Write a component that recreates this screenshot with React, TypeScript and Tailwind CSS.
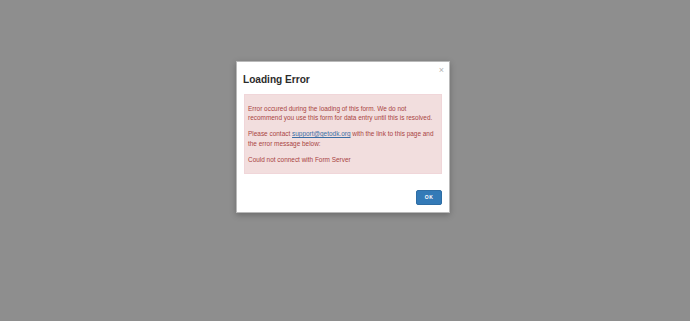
export default function App() {
  return (
    <main className="w-[690px] h-[321px] bg-[#8e8e8e] flex justify-center pr-[4px] pt-[61px] font-['Liberation_Sans',Arial,sans-serif]">
      <section className="relative w-[214px] h-[152px] bg-white border border-[#b9b9b9] shadow-[0_2px_6px_rgba(0,0,0,0.25)] flex flex-col">
        <button className="absolute right-[5px] top-[4px] text-[9px] leading-[9px] text-[#b3b3b3]">×</button>
        <header className="pl-[6px] pt-[11.5px]">
          <h3 className="text-[10.1px] leading-[11px] font-bold text-[#2b2b2b]">Loading Error</h3>
        </header>
        <article className="mx-[7px] mt-[9.5px] h-[80px] bg-[#f2dede] border border-[#f0d6d9] pl-[3px] pr-[4px] pt-[8.5px] text-[6.45px] leading-[9.3px] text-[#a94442]">
          <p className="mb-[7.3px]">
            Error occured during the loading of this form. We do not recommend you use this form for data entry until
            this is resolved.
          </p>
          <p className="mb-[7.3px]">
            Please contact{' '}
            <a href="#" className="text-[#3a6ea5] underline">
              support@getodk.org
            </a>{' '}
            with the link to this page and the error message below:
          </p>
          <p>Could not connect with Form Server</p>
        </article>
        <footer className="flex justify-end px-[7px] mt-[16px]">
          <button className="w-[26px] h-[15px] bg-[#337ab7] border border-[#2e6da4] rounded-[2px] text-white text-[5px] font-bold tracking-[0.5px] flex items-center justify-center">
            OK
          </button>
        </footer>
      </section>
    </main>
  );
}
